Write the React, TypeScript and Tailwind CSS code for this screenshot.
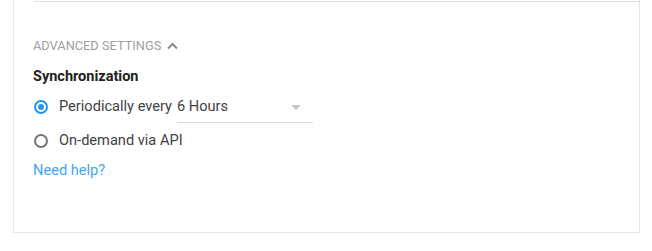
export default function App() {
  return (
    <div className="h-[251px] w-[652px] bg-white" style={{ fontFamily: "Roboto, sans-serif" }}>
      <div className="ml-[13px] h-[233px] w-[627px] border-x border-b border-[#e6e6e6] pl-[19px]">
        <div className="ml-px h-[2px] border-b border-[#dedede] pt-px" />
        <div className="pt-[36px]">
          <div className="flex items-center gap-[6px] text-[12.8px] leading-[16px] text-[#9e9e9e]">
            <span>ADVANCED SETTINGS</span>
            <svg width="11" height="8" viewBox="0 0 11 8" className="mt-[-1px]">
              <path d="M1 6.5 L5.5 2 L10 6.5" fill="none" stroke="#8a8a8a" strokeWidth="2" />
            </svg>
          </div>
          <div className="mt-[14px] text-[14.5px] font-bold leading-[18px] text-[#212121]">Synchronization</div>
          <div className="mt-[5px] flex items-center">
            <span className="ml-[1px] flex h-[14px] w-[14px] items-center justify-center rounded-full border-2 border-[#2196f3]">
              <span className="h-[6px] w-[6px] rounded-full bg-[#2196f3]" />
            </span>
            <span className="ml-[11px] text-[14.6px] text-[#424242]">Periodically every</span>
            <div className="relative ml-[5px] flex h-[32px] w-[136px] items-center border-b border-[#dcdcd4]">
              <span className="text-[14.6px] text-[#424242]">6 Hours</span>
              <svg width="10" height="5" viewBox="0 0 10 5" className="absolute right-[12px] top-[14px]">
                <path d="M0 0 L10 0 L5 5 Z" fill="#c4c4c4" />
              </svg>
            </div>
          </div>
          <div className="mt-[7px] flex items-center">
            <span className="ml-[1px] h-[14px] w-[14px] rounded-full border-2 border-[#757575]" />
            <span className="ml-[11px] text-[14.6px] text-[#424242]">On-demand via API</span>
          </div>
          <div className="mt-[8px] text-[14.6px] text-[#42a5f5]">Need help?</div>
        </div>
      </div>
    </div>
  );
}
